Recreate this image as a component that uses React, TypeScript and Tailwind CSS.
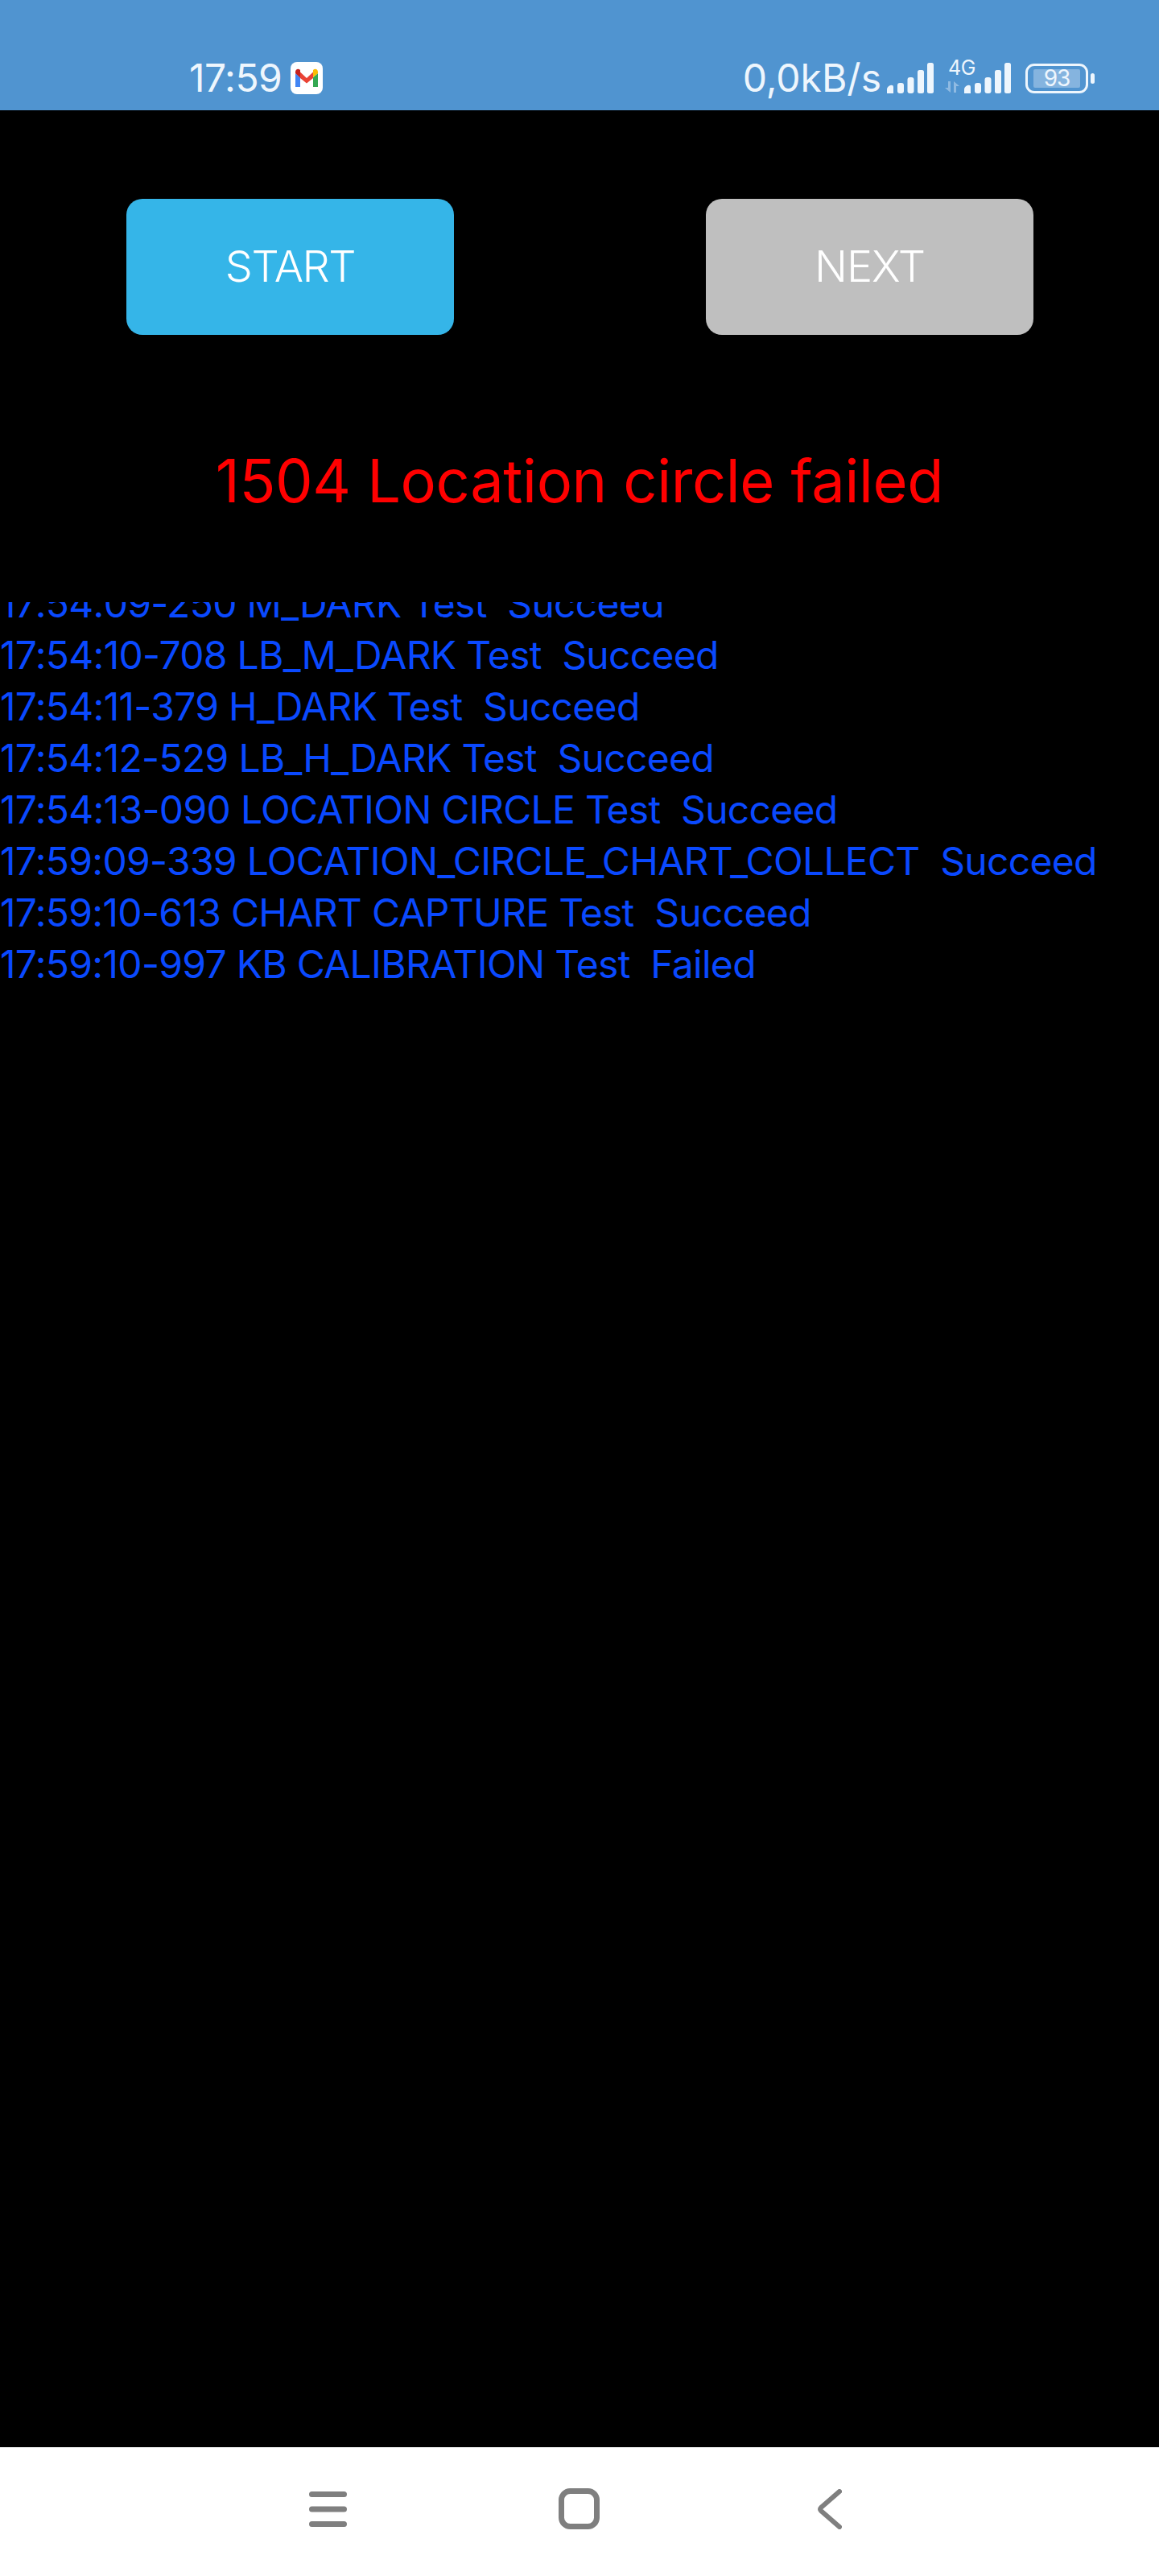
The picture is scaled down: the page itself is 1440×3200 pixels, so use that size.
const logLines = [
  '17:54:09-250 M_DARK Test  Succeed',
  '17:54:10-708 LB_M_DARK Test  Succeed',
  '17:54:11-379 H_DARK Test  Succeed',
  '17:54:12-529 LB_H_DARK Test  Succeed',
  '17:54:13-090 LOCATION CIRCLE Test  Succeed',
  '17:59:09-339 LOCATION_CIRCLE_CHART_COLLECT  Succeed',
  '17:59:10-613 CHART CAPTURE Test  Succeed',
  '17:59:10-997 KB CALIBRATION Test  Failed',
];

function GmailIcon() {
  return (
    <div className="flex h-10 w-10 items-center justify-center rounded-[8px] bg-white">
      <svg viewBox="0 0 32 26" className="h-[26px] w-8">
        <path d="M2 7v17h6V12z" fill="#4285f4" />
        <path d="M24 12v12h6V7z" fill="#34a853" />
        <path d="M8 5.500 16 13l8-7.500V13l-8 6.500L8 13z" fill="#ea4335" />
        <path d="M2 5.500C2 2 5.500 0.500 8 3l0 9.500L2 7z" fill="#c5221f" />
        <path d="M24 3c2.500-2.500 6-1 6 2.500V7l-6 5z" fill="#fbbc04" />
      </svg>
    </div>
  );
}

function SignalIcon() {
  return (
    <svg viewBox="0 0 58 38" className="h-[38px] w-[58px]" fill="#eef6fd">
      <path d="M0 33q0-3 4-5 4-1 4 2v8H0z" />
      <rect x="13" y="25" width="8" height="13" rx="3" />
      <rect x="25.500" y="18" width="8" height="20" rx="3" />
      <rect x="38" y="9" width="8" height="29" rx="2.500" />
      <rect x="50" y="0" width="8" height="38" rx="2.500" />
    </svg>
  );
}

function NetworkIcon() {
  return (
    <div className="relative h-[38px] w-[82px]">
      <span className="absolute left-[4px] top-[-7px] font-['Inter',sans-serif] text-[25px] leading-[26px] tracking-[-0.5px] text-[#eef6fd]">
        4G
      </span>
      <svg viewBox="0 0 18 14" className="absolute bottom-[1px] left-0 h-[14px] w-[18px]" fill="#8fbae2">
        <path d="M4 0h3v14L0 8h4zM11 0l7 6h-4v8h-3z" />
      </svg>
      <div className="absolute bottom-0 right-0">
        <SignalIcon />
      </div>
    </div>
  );
}

function BatteryIcon() {
  return (
    <div className="flex items-center gap-[3px]">
      <div className="flex h-[37px] w-[78px] items-center justify-center rounded-[11px] border-[3px] border-[#eef6fd]">
        <div className="flex h-[23px] w-[58px] items-center justify-center rounded-[2px] bg-[#85b4df] font-['Inter',sans-serif] text-[28px] leading-none tracking-[-1px] text-[#eef6fd]">
          93
        </div>
      </div>
      <div className="h-[13px] w-[5px] rounded-full bg-[#eef6fd]" />
    </div>
  );
}

function StatusBar() {
  return (
    <div className="flex h-[137px] items-end justify-between bg-[#5094d0] pb-[20px] pl-[235px] pr-[80px] font-['Inter',sans-serif] text-[#eef6fd]">
      <div className="flex items-center gap-[11px]">
        <span className="text-[48px] leading-[40px] tracking-[-0.5px]">17:59</span>
        <GmailIcon />
      </div>
      <div className="flex items-center">
        <span className="text-[48px] leading-[40px]">0,0kB/s</span>
        <div className="ml-[7px]">
          <SignalIcon />
        </div>
        <div className="ml-[14px]">
          <NetworkIcon />
        </div>
        <div className="ml-[18px]">
          <BatteryIcon />
        </div>
      </div>
    </div>
  );
}

function NavBar() {
  return (
    <div className="flex h-[160px] items-start bg-white pl-[384px] pt-[51px]">
      <svg viewBox="0 0 47 44" className="mt-[4px] h-[44px] w-[47px]" stroke="#7f7f7f" strokeWidth="7" strokeLinecap="round">
        <path d="M3.500 3.500h40M3.500 22h40M3.500 40.500h40" />
      </svg>
      <svg viewBox="0 0 51 51" className="ml-[263px] h-[51px] w-[51px]" fill="none" stroke="#7f7f7f" strokeWidth="7">
        <rect x="3.500" y="3.500" width="44" height="44" rx="11" />
      </svg>
      <svg viewBox="0 0 31 50" className="ml-[270px] mt-[1px] h-[50px] w-[31px]" fill="none" stroke="#7f7f7f" strokeWidth="6" strokeLinecap="round" strokeLinejoin="round">
        <path d="M28 3 5 23q-2 2 0 4l23 20" />
      </svg>
    </div>
  );
}

export default function App() {
  return (
    <div className="flex h-[3200px] w-[1440px] flex-col overflow-hidden bg-black font-['Inter',sans-serif]">
      <StatusBar />

      <div className="flex gap-[313px] pl-[157px] pt-[110px]">
        <div className="flex h-[169px] w-[407px] items-center justify-center rounded-[20px] bg-[#35b5e8] pb-[3px] text-[54px] font-light tracking-[-1.5px] text-white">
          START
        </div>
        <div className="flex h-[169px] w-[407px] items-center justify-center rounded-[20px] bg-[#bfbfbf] pb-[3px] text-[54px] font-light tracking-[-1px] text-white">
          NEXT
        </div>
      </div>

      <div className="mt-[131px] text-center text-[74px] font-normal leading-[100px] tracking-[-0.4px] text-[#ff0000]">
        1504 Location circle failed
      </div>

      <div className="mt-[101px] flex h-[482px] flex-col justify-end overflow-hidden">
        {logLines.map((line) => (
          <div key={line} className="h-16 shrink-0 whitespace-pre text-[48px] font-normal leading-[64px] tracking-[-0.7px] text-[#0a49ff]">
            {line}
          </div>
        ))}
      </div>

      <div className="flex-1" />
      <NavBar />
    </div>
  );
}
